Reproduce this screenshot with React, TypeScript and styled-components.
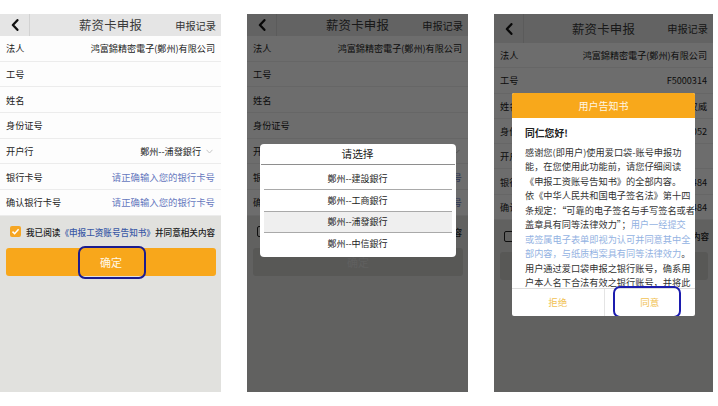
import type { ReactNode } from 'react'
import styled, { createGlobalStyle } from 'styled-components'

const GlobalStyle = createGlobalStyle`
  html, body {
    margin: 0;
    padding: 0;
    background: #ffffff;
  }
  body {
    font-family: "Noto Sans CJK SC", "Noto Sans", sans-serif;
  }
  * {
    box-sizing: border-box;
  }
`

interface FieldRow {
  label: string
  value?: string
  placeholder?: boolean
  select?: boolean
}

const company = '鸿富錦精密電子(鄭州)有限公司'
const cardHint = '请正确输入您的银行卡号'

const emptyForm: FieldRow[] = [
  { label: '法人', value: company },
  { label: '工号' },
  { label: '姓名' },
  { label: '身份证号' },
  { label: '开户行', value: '鄭州--浦發銀行', select: true },
  { label: '银行卡号', value: cardHint, placeholder: true },
  { label: '确认银行卡号', value: cardHint, placeholder: true },
]

const filledForm: FieldRow[] = [
  { label: '法人', value: company },
  { label: '工号', value: 'F5000314' },
  { label: '姓名', value: '刘汉威' },
  { label: '身份证号', value: '410182199203150052' },
  { label: '开户行' },
  { label: '银行卡号', value: '6217002430011234484' },
  { label: '确认银行卡号', value: '6217002430011234484' },
]

const banks = ['鄭州--建設銀行', '鄭州--工商銀行', '鄭州--浦發銀行', '鄭州--中信銀行']

const noticeLines: { text: string; link?: string; tail?: string }[] = [
  { text: '感谢您(即用户)使用爱口袋-账号申报功' },
  { text: '能，在您使用此功能前，请您仔细阅读' },
  { text: '《申报工资账号告知书》的全部内容。' },
  { text: '依《中华人民共和国电子签名法》第十四' },
  { text: '条规定：“可靠的电子签名与手写签名或者' },
  { text: '盖章具有同等法律效力”；', link: '用户一经提交' },
  { text: '', link: '或签属电子表单即视为认可并同意其中全' },
  { text: '', link: '部内容，与纸质档案具有同等法律效力', tail: '。' },
  { text: '用户通过爱口袋申报之银行账号，确系用' },
  { text: '户本人名下合法有效之银行账号，并将此' },
]

interface PhoneProps {
  width: number
  headerHeight: number
  rowHeight: number
  rows: FieldRow[]
  checked: boolean
  mark?: boolean
  children?: ReactNode
}

function Phone({ width, headerHeight, rowHeight, rows, checked, mark, children }: PhoneProps) {
  return (
    <Screen $width={width}>
      <Header $height={headerHeight}>
        <BackBox>
          <svg width="8" height="12" viewBox="0 0 8 12">
            <path d="M6.4 1.2 L1.9 6 L6.4 10.8" stroke="#111" strokeWidth="2.3" fill="none" strokeLinecap="round" strokeLinejoin="round" />
          </svg>
        </BackBox>
        <Title>薪资卡申报</Title>
        <HeaderLink>申报记录</HeaderLink>
      </Header>

      <Form>
        {rows.map((row) => (
          <Row key={row.label} $height={rowHeight}>
            <Label>{row.label}</Label>
            {row.value && (
              <Value $hint={row.placeholder}>
                {row.value}
                {row.select && (
                  <SelectArrow width="7" height="5" viewBox="0 0 7 5">
                    <path d="M0.5 0.8 L3.5 4 L6.5 0.8" stroke="#c6c6c6" strokeWidth="1" fill="none" />
                  </SelectArrow>
                )}
              </Value>
            )}
          </Row>
        ))}
      </Form>

      <AgreeRow>
        <CheckBox $checked={checked}>
          {checked && (
            <svg width="9" height="9" viewBox="0 0 9 9">
              <path d="M1.5 4.6 L3.6 6.7 L7.6 2.3" stroke="#fff" strokeWidth="1.5" fill="none" />
            </svg>
          )}
        </CheckBox>
        <span>
          我已阅读<AgreeLink>《申报工资账号告知书》</AgreeLink>并同意相关内容
        </span>
      </AgreeRow>

      <SubmitButton $active={checked}>
        确定
        {mark && <ButtonMark />}
      </SubmitButton>

      {children && <Overlay>{children}</Overlay>}
    </Screen>
  )
}

export default function App() {
  return (
    <>
      <GlobalStyle />
      <Page>
        <Phone width={221} headerHeight={22} rowHeight={25.7} rows={emptyForm} checked mark />

        <Phone width={221} headerHeight={22} rowHeight={25.7} rows={emptyForm} checked={false}>
          <Picker>
            <PickerTitle>请选择</PickerTitle>
            <OptionList>
              {banks.map((bank, index) => (
                <Option key={bank} $first={index === 0} $active={index === 2}>
                  {bank}
                </Option>
              ))}
            </OptionList>
          </Picker>
        </Phone>

        <Phone width={219} headerHeight={29} rowHeight={25.3} rows={filledForm} checked={false}>
          <Notice>
            <NoticeHeader>用户告知书</NoticeHeader>
            <NoticeBody>
              <Greeting>同仁您好!</Greeting>
              {noticeLines.map((line, index) => (
                <NoticeLine key={index}>
                  {line.text}
                  {line.link && <NoticeLink>{line.link}</NoticeLink>}
                  {line.tail}
                </NoticeLine>
              ))}
            </NoticeBody>
            <NoticeFooter>
              <NoticeButton>拒绝</NoticeButton>
              <NoticeButton $divider>
                同意
                <AgreeMark />
              </NoticeButton>
            </NoticeFooter>
          </Notice>
        </Phone>
      </Page>
    </>
  )
}

const Page = styled.main`
  display: grid;
  grid-template-columns: 221px 221px 219px;
  column-gap: 26px;
  align-items: start;
  padding-top: 14px;
  width: 718px;
  height: 406px;
`

const Screen = styled.section<{ $width: number }>`
  position: relative;
  width: ${({ $width }) => $width}px;
  height: 378px;
  background: #e1e1de;
  overflow: hidden;
  display: flex;
  flex-direction: column;
`

const Header = styled.header<{ $height: number }>`
  display: grid;
  grid-template-columns: 1fr auto 1fr;
  align-items: center;
  height: ${({ $height }) => $height}px;
  background: #e5e5e5;
  color: #333;
`

const BackBox = styled.div`
  justify-self: start;
  width: 30px;
  height: 100%;
  display: flex;
  align-items: center;
  justify-content: center;
  border-right: 1px solid #d2d2d2;
`

const Title = styled.div`
  font-size: 12.4px;
  letter-spacing: 0.2px;
  color: #3a3a3a;
`

const HeaderLink = styled.div`
  justify-self: end;
  padding-right: 5px;
  font-size: 10.2px;
  color: #333;
`

const Form = styled.div`
  background: #fdfdfd;
`

const Row = styled.div<{ $height: number }>`
  display: flex;
  align-items: center;
  justify-content: space-between;
  height: ${({ $height }) => $height}px;
  padding: 0 6px;
  border-bottom: 1px solid #ececec;
`

const Label = styled.span`
  font-size: 9.2px;
  color: #222;
`

const Value = styled.span<{ $hint?: boolean }>`
  display: flex;
  align-items: center;
  font-size: ${({ $hint }) => ($hint ? '9.4px' : '9.1px')};
  color: ${({ $hint }) => ($hint ? '#6577bd' : '#222')};
  white-space: nowrap;
`

const SelectArrow = styled.svg`
  margin-left: 5px;
  margin-right: 2px;
`

const AgreeRow = styled.div`
  display: flex;
  align-items: center;
  gap: 5px;
  height: 32px;
  padding-left: 10px;
  font-size: 8.6px;
  font-weight: 500;
  color: #222;
  white-space: nowrap;
`

const CheckBox = styled.span<{ $checked: boolean }>`
  flex: none;
  width: 11px;
  height: 11px;
  border-radius: 2px;
  display: flex;
  align-items: center;
  justify-content: center;
  background: ${({ $checked }) => ($checked ? '#f6a623' : 'transparent')};
  border: ${({ $checked }) => ($checked ? 'none' : '1.4px solid #222')};
`

const AgreeLink = styled.span`
  color: #3b5aa6;
`

const SubmitButton = styled.div<{ $active: boolean }>`
  position: relative;
  margin: 0 5px 0 6px;
  height: 28px;
  border-radius: 3px;
  display: flex;
  align-items: center;
  justify-content: center;
  background: ${({ $active }) => ($active ? '#f8a71b' : '#cbcbc8')};
  color: ${({ $active }) => ($active ? '#fff8e8' : '#dededc')};
  font-size: 11px;
`

const ButtonMark = styled.span`
  position: absolute;
  left: 72px;
  top: -2px;
  width: 68px;
  height: 33px;
  border: 2px solid #1c1c8e;
  border-radius: 7px;
`

const Overlay = styled.div`
  position: absolute;
  inset: 0;
  background: rgba(0, 0, 0, 0.57);
  display: flex;
  align-items: center;
  justify-content: center;
`

const Picker = styled.div`
  width: 196px;
  margin-top: -5px;
  background: #ffffff;
  border-radius: 4px;
  overflow: hidden;
`

const PickerTitle = styled.div`
  height: 20.5px;
  display: flex;
  align-items: center;
  justify-content: center;
  font-size: 10.7px;
  color: #222;
  border-bottom: 1.5px solid #8e8e8e;
  margin: 0 1px;
`

const OptionList = styled.div`
  padding: 3px 4px 3.5px;
`

const Option = styled.div<{ $first: boolean; $active: boolean }>`
  height: 21.5px;
  display: flex;
  align-items: center;
  justify-content: center;
  font-size: 9px;
  color: #222;
  background: ${({ $active }) => ($active ? '#efefef' : 'transparent')};
  border-top: ${({ $first }) => ($first ? 'none' : '1px solid #a9a9a9')};
`

const Notice = styled.div`
  width: 183px;
  margin-top: 2px;
  background: #ffffff;
  border-radius: 2px;
  overflow: hidden;
`

const NoticeHeader = styled.div`
  height: 25px;
  display: flex;
  align-items: center;
  justify-content: center;
  background: #f8a81b;
  color: #fff6e4;
  font-size: 10px;
`

const NoticeBody = styled.div`
  height: 170px;
  overflow: hidden;
  padding: 8px 6px 0 13px;
  color: #333;
`

const Greeting = styled.div`
  font-size: 9.8px;
  font-weight: 700;
  line-height: 14px;
  margin-bottom: 5px;
  color: #222;
`

const NoticeLine = styled.div`
  font-size: 9.2px;
  line-height: 14.5px;
  white-space: nowrap;
`

const NoticeLink = styled.span`
  color: #93b2e2;
`

const NoticeFooter = styled.div`
  display: grid;
  grid-template-columns: 1fr 1fr;
  height: 28px;
  border-top: 1px solid #dedede;
`

const NoticeButton = styled.div<{ $divider?: boolean }>`
  position: relative;
  display: flex;
  align-items: center;
  justify-content: center;
  font-size: 9.5px;
  color: #f1c252;
  border-left: ${({ $divider }) => ($divider ? '1px solid #e4e4e4' : 'none')};
`

const AgreeMark = styled.span`
  position: absolute;
  left: 8px;
  top: -3px;
  width: 68px;
  height: 32px;
  border: 2px solid #1c1cae;
  border-radius: 7px;
`
